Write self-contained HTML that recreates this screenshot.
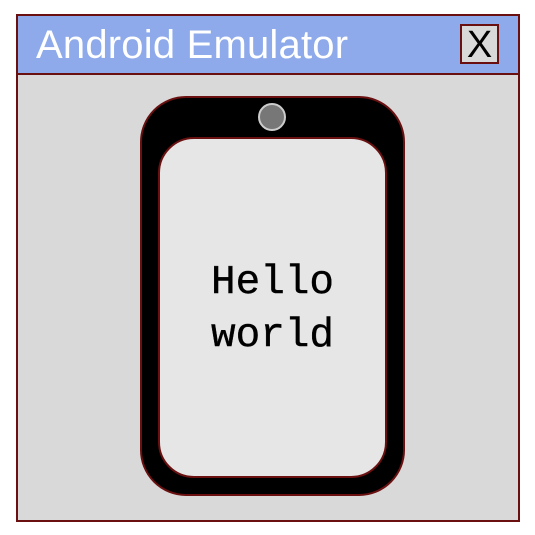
<!DOCTYPE html>
<html><head><style>
body{margin:0;width:535px;height:535px;background:#fff;position:relative;overflow:hidden}
div{position:absolute;box-sizing:border-box}
</style></head><body>
<div style="left:16px;top:14px;width:504px;height:508px;background:#d9d9d9;border:2px solid #6a1010"></div>
<div style="left:16px;top:14px;width:504px;height:61px;background:#8eaaea;border:2px solid #6a1010"></div>
<div style="left:36px;top:20px;font:40px 'Liberation Sans',sans-serif;color:#fff;line-height:50px;letter-spacing:0.2px">Android Emulator</div>
<div style="left:460px;top:24px;width:39px;height:40px;background:#d9d9d9;border:2px solid #6a1010;font:38px 'Liberation Sans',sans-serif;text-align:center;line-height:38px;color:#000">X</div>
<div style="left:140px;top:96px;width:265px;height:400px;background:#000;border:2px solid #6a1010;border-radius:46px"></div>
<div style="left:158px;top:137px;width:229px;height:341px;background:#e6e6e6;border:2px solid #6a1010;border-radius:36px"></div>
<div style="left:258px;top:103px;width:28px;height:28px;border-radius:50%;background:#777;border:2px solid #ccc"></div>
<div style="left:158px;top:257px;width:229px;text-align:center;font:41px 'Liberation Mono',monospace;line-height:53px;color:#000;-webkit-text-stroke:0.4px #000">Hello<br>world</div>
</body></html>
